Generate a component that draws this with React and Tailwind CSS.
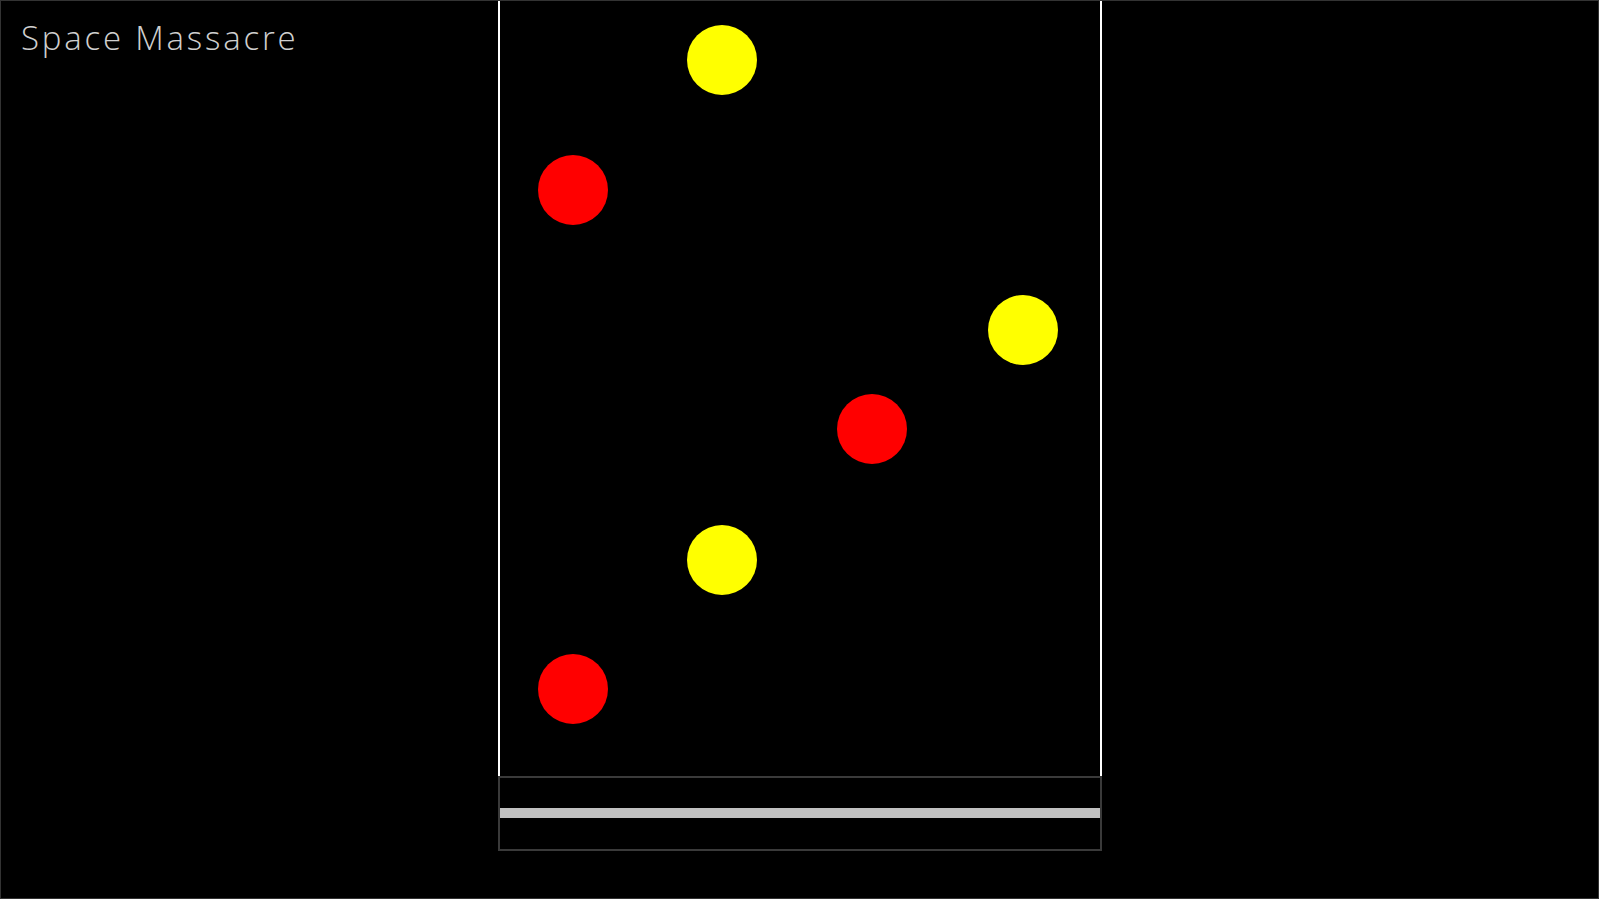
export default function App() {
  const balls = [
    { left: 187, top: 24, color: "bg-[#ffff00]" },
    { left: 38, top: 154, color: "bg-[#ff0000]" },
    { left: 488, top: 294, color: "bg-[#ffff00]" },
    { left: 337, top: 393, color: "bg-[#ff0000]" },
    { left: 187, top: 524, color: "bg-[#ffff00]" },
    { left: 38, top: 653, color: "bg-[#ff0000]" },
  ];

  return (
    <div className="w-[1599px] h-[899px] bg-black border border-[#333] grid grid-cols-[1fr_604px_1fr] overflow-hidden">
      <div className="pl-[20px] pt-[15px]">
        <h1 className="font-['Open_Sans',sans-serif] font-light text-[33px] leading-[44px] tracking-[2.8px] text-[#cfcfcf]">
          Space Massacre
        </h1>
      </div>

      <div className="flex flex-col">
        <div className="relative h-[775px] border-l-2 border-r-2 border-white">
          {balls.map((b, i) => (
            <div
              key={i}
              className={`absolute w-[70px] h-[70px] rounded-full ${b.color}`}
              style={{ left: b.left, top: b.top }}
            />
          ))}
        </div>
        <div className="h-[75px] border-2 border-[#3a3a3a] pt-[30px]">
          <div className="h-[10px] bg-[#c0c0c0]" />
        </div>
      </div>

      <div />
    </div>
  );
}
